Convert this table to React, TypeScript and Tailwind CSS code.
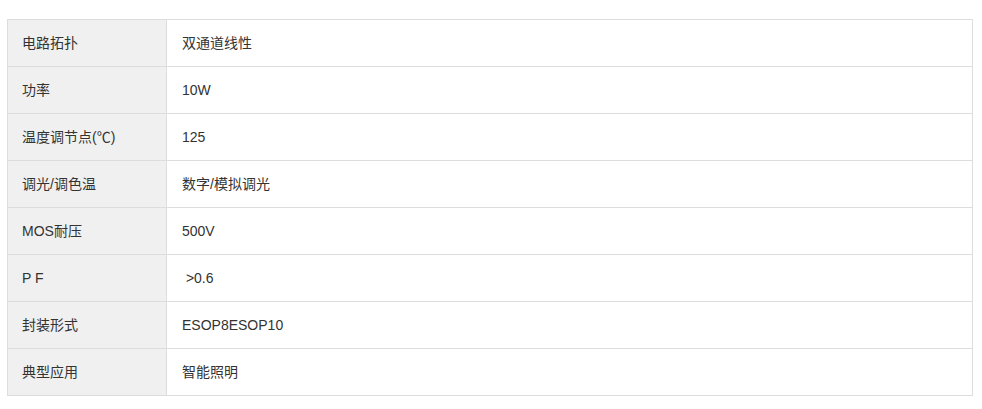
const rows: [string, string][] = [
  ['电路拓扑', '双通道线性'],
  ['功率', '10W'],
  ['温度调节点(℃)', '125'],
  ['调光/调色温', '数字/模拟调光'],
  ['MOS耐压', '500V'],
  ['P F', '\u00a0>0.6'],
  ['封装形式', 'ESOP8ESOP10'],
  ['典型应用', '智能照明'],
]

export default function App() {
  return (
    <div className="w-[982px] h-[409px] bg-white pt-[19px] pl-[7px]" style={{ fontFamily: '"Liberation Sans", "Noto Sans CJK SC", sans-serif' }}>
      <div className="w-[966px] border-t border-l border-[#dddddd] text-[14px] text-[#333333]">
        {rows.map(([k, v]) => (
          <div key={k} className="flex">
            <div className="w-[159px] h-[47px] flex items-center pl-[14px] bg-[#f0f0f0] border-r border-b border-[#dddddd]">
              {k}
            </div>
            <div className="flex-1 h-[47px] flex items-center pl-[15px] border-r border-b border-[#dddddd] whitespace-pre">
              {v}
            </div>
          </div>
        ))}
      </div>
    </div>
  )
}
